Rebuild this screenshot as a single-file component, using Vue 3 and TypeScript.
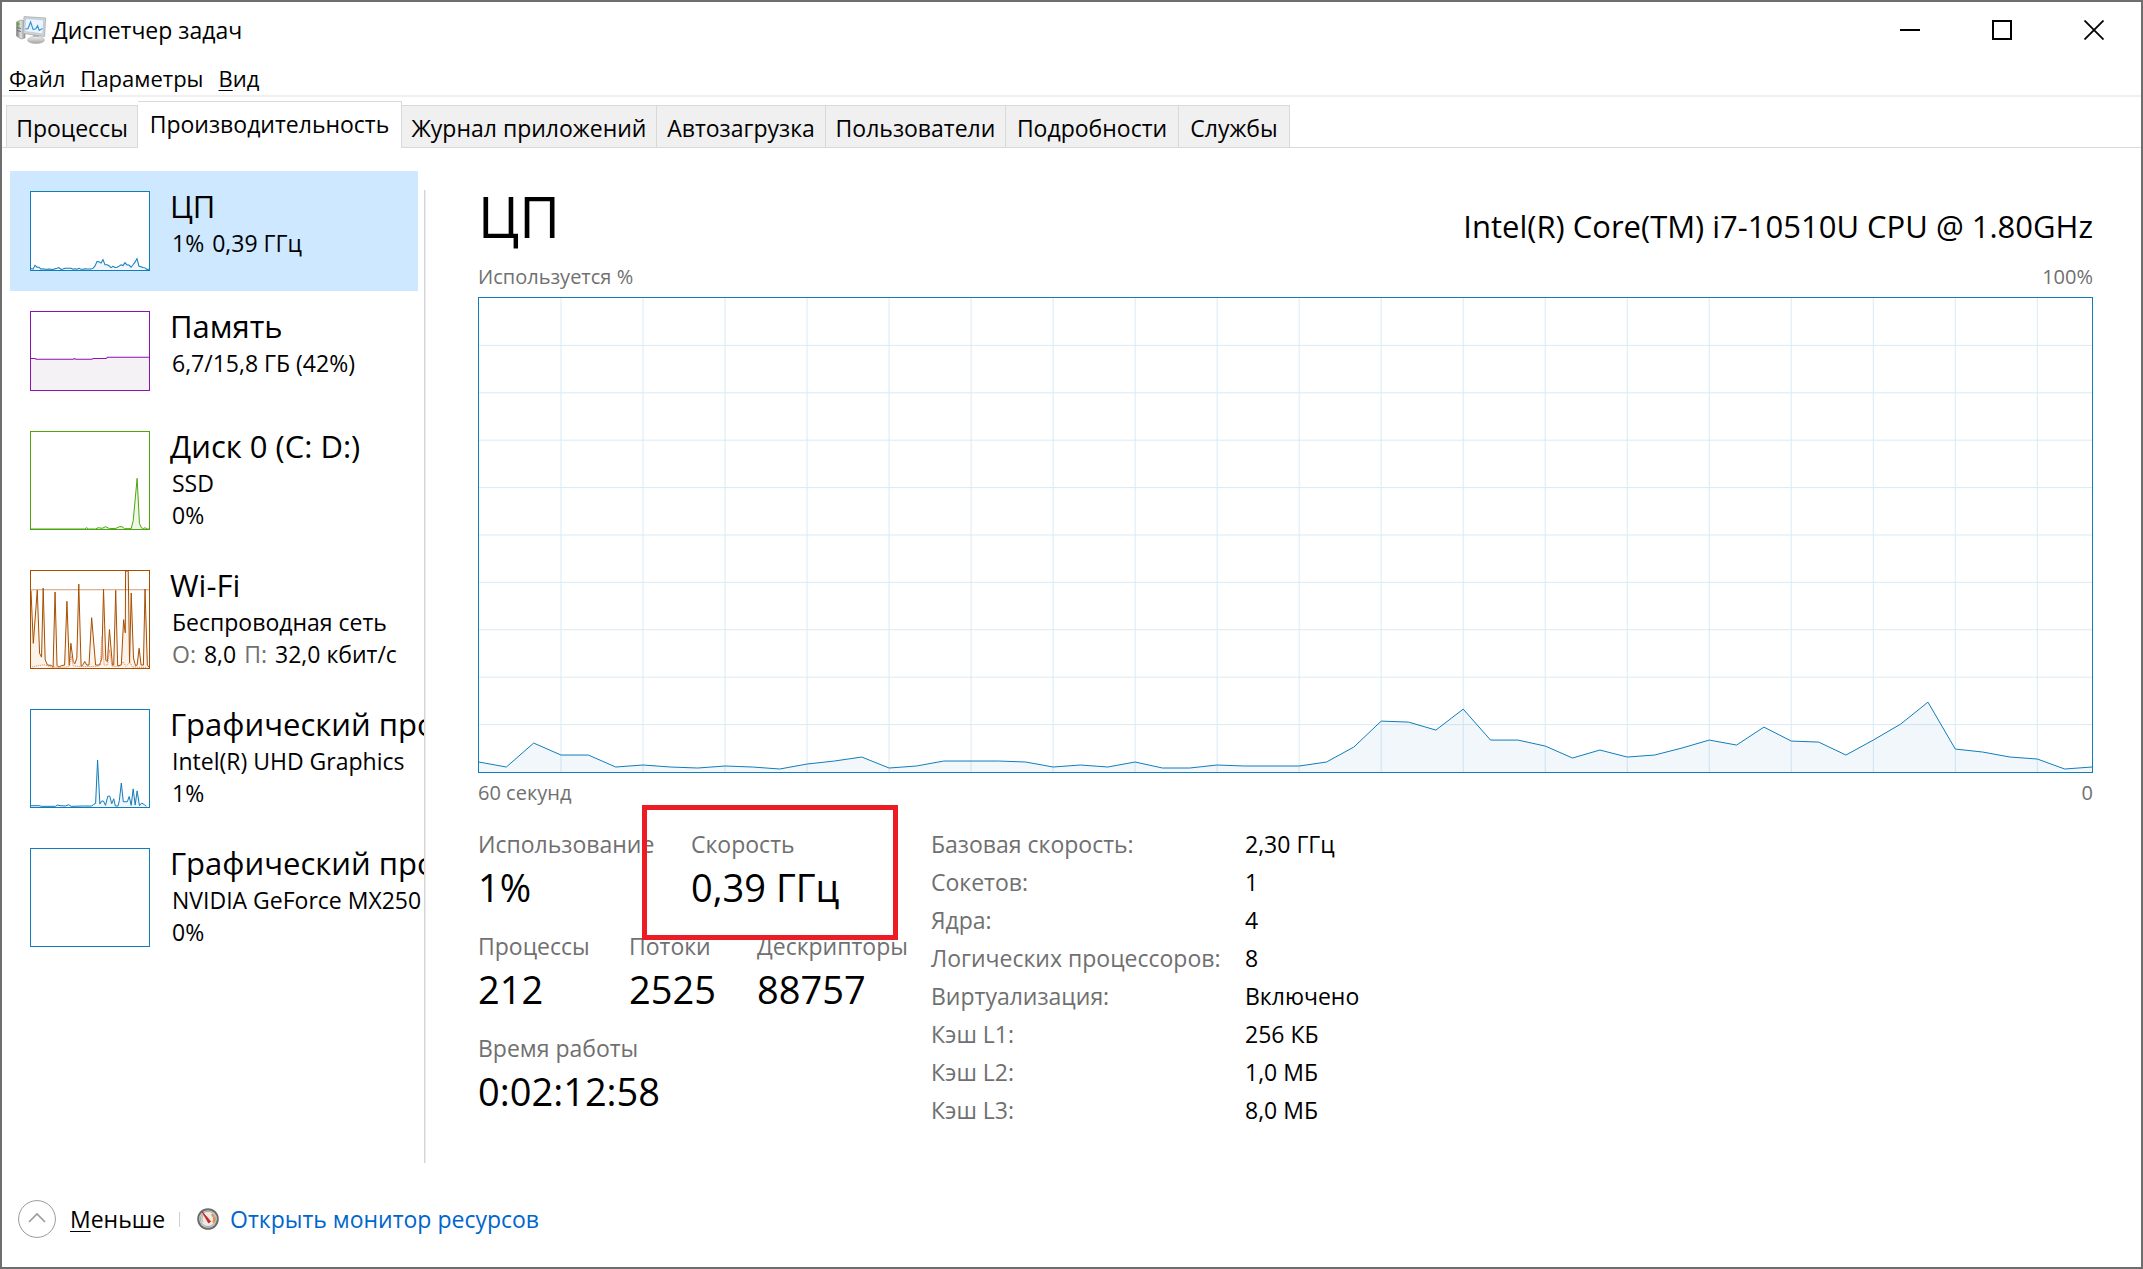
<script setup lang="ts">
import { ref } from 'vue'

interface Tab {
  label: string
  width: number
}

interface Part {
  text: string
  muted?: boolean
}

interface Resource {
  title: string
  lines: Part[][]
  kind: 'cpu' | 'memory' | 'disk' | 'wifi' | 'gpu'
  tall: boolean
  line: string
}

const tabs: Tab[] = [
  { label: 'Процессы', width: 132 },
  { label: 'Производительность', width: 264 },
  { label: 'Журнал приложений', width: 255 },
  { label: 'Автозагрузка', width: 169 },
  { label: 'Пользователи', width: 180 },
  { label: 'Подробности', width: 173 },
  { label: 'Службы', width: 111 },
]
const activeTab = ref(1)
const activeResource = ref(0)

// CPU load over the last minute, one sample per second, on a scale of 0 to 475
const load: number[] = [
  10, 5, 29, 17, 17, 5, 7, 5, 4, 6, 5, 3, 8, 11, 15, 4, 6, 11, 11, 11,
  10, 5, 7, 5, 10, 4, 4, 7, 6, 6, 6, 10, 25, 51, 50, 42, 63, 32, 32, 26,
  14, 22, 15, 17, 24, 32, 27, 45, 31, 30, 17, 32, 48, 70, 23, 20, 15, 13, 3, 5,
]
const FULL = 475
const lastIndex = load.length - 1

const loadLine = load.map((v, i) => `${i},${FULL - v}`).join(' ')
const loadArea = `0,${FULL} ${loadLine} ${lastIndex},${FULL}`

const cpuThumb = load.map((v, i) => `${(i * 358) / lastIndex},${238 - (v * 238) / FULL}`).join(' ')

const columns = Array.from({ length: 19 }, (_, i) => (i + 1) * 3)
const rows = Array.from({ length: 9 }, (_, i) => ((i + 1) * FULL) / 10)

const resources: Resource[] = [
  {
    title: 'ЦП',
    lines: [[{ text: '1%' }, { text: '0,39 ГГц' }]],
    kind: 'cpu',
    tall: false,
    line: cpuThumb,
  },
  {
    title: 'Память',
    lines: [[{ text: '6,7/15,8 ГБ (42%)' }]],
    kind: 'memory',
    tall: false,
    line: '0,142 12,142 16,144 128,144 132,142 136,144 184,144 190,142 228,142 232,138 358,138',
  },
  {
    title: 'Диск 0 (C: D:)',
    lines: [[{ text: 'SSD' }], [{ text: '0%' }]],
    kind: 'disk',
    tall: true,
    line:
      '0,295 162,295 169,291 174,295 196,295 204,291 210,292 216,293 226,288 238,294 258,293 268,288 276,288 284,294 304,294 310,270 322,141 329,278 335,291 341,294 346,291 352,295 358,295',
  },
  {
    title: 'Wi-Fi',
    lines: [
      [{ text: 'Беспроводная сеть' }],
      [{ text: 'О:', muted: true }, { text: '8,0' }, { text: 'П:', muted: true }, { text: '32,0 кбит/с' }],
    ],
    kind: 'wifi',
    tall: true,
    line:
      '0,60 7,220 19,58 26,250 32,262 37,52 43,270 50,286 62,287 67,293 73,64 79,288 85,292 92,288 102,286 109,92 116,286 121,220 128,275 133,282 139,265 145,40 152,290 158,285 163,275 169,286 176,286 184,142 196,286 208,286 215,265 220,55 227,272 232,275 238,178 247,286 251,286 257,59 263,288 274,286 281,148 286,188 287,0 295,0 299,280 304,67 311,265 317,288 322,286 328,235 334,286 341,286 346,55 353,286 358,293',
  },
  {
    title: 'Графический процессор 0',
    lines: [[{ text: 'Intel(R) UHD Graphics' }], [{ text: '1%' }]],
    kind: 'gpu',
    tall: true,
    line:
      '0,291 24,291 32,293 74,293 80,289 88,291 104,292 114,288 122,293 160,292 184,292 190,287 196,284 202,152 209,286 214,277 220,277 226,290 233,262 239,262 245,285 251,270 256,292 264,292 268,276 274,222 280,279 292,279 298,263 304,290 310,240 316,289 322,246 329,291 336,283 344,288 350,293',
  },
  {
    title: 'Графический процессор 1',
    lines: [[{ text: 'NVIDIA GeForce MX250' }], [{ text: '0%' }]],
    kind: 'gpu',
    tall: true,
    line: '',
  },
]

const thumbHeight = (r: Resource): number => (r.tall ? 297 : 240)
const thumbArea = (r: Resource): string => `0,${thumbHeight(r)} ${r.line} 358,${thumbHeight(r)}`

const counts = [
  { label: 'Процессы', value: '212', size: 'narrow' },
  { label: 'Потоки', value: '2525', size: 'small' },
  { label: 'Дескрипторы', value: '88757', size: 'small' },
]

const details = [
  { label: 'Базовая скорость:', value: '2,30 ГГц' },
  { label: 'Сокетов:', value: '1' },
  { label: 'Ядра:', value: '4' },
  { label: 'Логических процессоров:', value: '8' },
  { label: 'Виртуализация:', value: 'Включено' },
  { label: 'Кэш L1:', value: '256 КБ' },
  { label: 'Кэш L2:', value: '1,0 МБ' },
  { label: 'Кэш L3:', value: '8,0 МБ' },
]
</script>

<template>
  <div class="window">
    <header class="titlebar">
      <svg class="app-icon" viewBox="0 0 30 28" aria-hidden="true">
        <defs>
          <linearGradient id="tower" x1="0" x2="1">
            <stop offset="0" stop-color="#777" />
            <stop offset="0.5" stop-color="#e2e2e2" />
            <stop offset="1" stop-color="#8e8e8e" />
          </linearGradient>
          <linearGradient id="stand" x1="0" y1="0" x2="0" y2="1">
            <stop offset="0" stop-color="#f2f2f2" />
            <stop offset="1" stop-color="#a2a2a2" />
          </linearGradient>
        </defs>
        <path d="M0.5 6 L5 4 L9 5 V22 L5 23 L0.5 20 Z" fill="url(#tower)" stroke="#8c8c8c" stroke-width="0.6" />
        <rect x="1" y="7" width="2.4" height="2.4" fill="#44c020" />
        <path d="M1 11.5 L5 12.5 M1 14.5 L5 15.5" stroke="#666" stroke-width="0.9" />
        <path d="M17 18 L23 19 V23 H17 Z" fill="#bcbcbc" />
        <ellipse cx="20" cy="24" rx="8.5" ry="3.6" fill="url(#stand)" stroke="#b0b0b0" stroke-width="0.6" />
        <path d="M8 0.6 L29.6 2 L28.6 20.5 L7 17.4 Z" fill="#d4d4d2" stroke="#a0a0a0" stroke-width="0.7" />
        <path d="M9.6 2.6 L27.6 3.8 L26.8 18 L8.8 15.4 Z" fill="#eaf5ff" stroke="#9cc3e0" stroke-width="0.6" />
        <path d="M9.4 13 L12 12.6 L14.6 6 L17.2 13.6 L19.8 12.8 L21.6 9.6 L23.2 14.4 L26.4 12.6" fill="none" stroke="#3b93cf" stroke-width="1.2" />
      </svg>
      <h1 class="title">Диспетчер задач</h1>
      <div class="controls">
        <button type="button" aria-label="Свернуть">
          <svg viewBox="0 0 20 20"><path d="M0 10 H20" stroke-width="2" /></svg>
        </button>
        <button type="button" aria-label="Развернуть">
          <svg viewBox="0 0 20 20"><rect x="1" y="1" width="18" height="18" stroke-width="2" /></svg>
        </button>
        <button type="button" aria-label="Закрыть">
          <svg viewBox="0 0 20 20"><path d="M0.5 0.5 L19.5 19.5 M19.5 0.5 L0.5 19.5" stroke-width="1.8" /></svg>
        </button>
      </div>
    </header>

    <nav class="menubar">
      <button type="button"><u>Ф</u>айл</button>
      <button type="button"><u>П</u>араметры</button>
      <button type="button"><u>В</u>ид</button>
    </nav>

    <div class="tabs" role="tablist">
      <button
        v-for="(tab, i) in tabs"
        :key="tab.label"
        type="button"
        role="tab"
        class="tab"
        :class="{ active: i === activeTab }"
        :aria-selected="i === activeTab"
        :style="{ width: tab.width + 'px' }"
        @click="activeTab = i"
      >
        {{ tab.label }}
      </button>
    </div>

    <div class="content">
      <aside class="sidebar">
        <button
          v-for="(r, i) in resources"
          :key="r.title"
          type="button"
          class="resource"
          :class="{ selected: i === activeResource }"
          @click="activeResource = i"
        >
          <span class="thumb" :class="[r.kind, { tall: r.tall }]">
            <svg :viewBox="`0 0 358 ${thumbHeight(r) - 2}`" preserveAspectRatio="none" aria-hidden="true">
              <template v-if="r.line">
                <polygon class="area" :points="thumbArea(r)" />
                <line v-if="r.kind === 'wifi'" class="limit" x1="0" y1="57" x2="358" y2="57" />
                <polyline class="line" :points="r.line" />
                <polyline
                  v-if="r.kind === 'wifi'"
                  class="dots"
                  points="4,292 20,288 40,285 60,292 100,293 116,290 122,258 128,288 150,291 200,290 210,286 215,200 222,286 232,286 238,240 246,290 270,290 280,276 288,290 300,278 308,292 350,293"
                />
              </template>
            </svg>
          </span>
          <span class="resource-text">
            <span class="resource-title">{{ r.title }}</span>
            <span v-for="(parts, n) in r.lines" :key="n" class="resource-line">
              <span v-for="part in parts" :key="part.text" :class="{ muted: part.muted }">{{ part.text }}</span>
            </span>
          </span>
        </button>
      </aside>

      <div class="divider"></div>

      <main class="main">
        <div class="heading">
          <h2>ЦП</h2>
          <p>Intel(R) Core(TM) i7-10510U CPU @ 1.80GHz</p>
        </div>
        <div class="axis top">
          <span>Используется %</span>
          <span>100%</span>
        </div>
        <div class="chart">
          <svg :viewBox="`0 0 ${lastIndex} ${FULL}`" preserveAspectRatio="none" role="img" aria-label="Загрузка ЦП">
            <line v-for="x in columns" :key="'c' + x" class="grid" :x1="x" y1="0" :x2="x" :y2="FULL" />
            <line v-for="y in rows" :key="'r' + y" class="grid" x1="0" :y1="y" :x2="lastIndex" :y2="y" />
            <polygon class="chart-area" :points="loadArea" />
            <polyline class="chart-line" :points="loadLine" />
          </svg>
        </div>
        <div class="axis bottom">
          <span>60 секунд</span>
          <span>0</span>
        </div>

        <div class="figures">
          <div class="stats">
            <dl class="stat-row">
              <div class="stat wide">
                <dt>Использование</dt>
                <dd>1%</dd>
              </div>
              <div class="stat marked">
                <dt>Скорость</dt>
                <dd>0,39 ГГц</dd>
              </div>
            </dl>
            <dl class="stat-row">
              <div v-for="c in counts" :key="c.label" class="stat" :class="c.size">
                <dt>{{ c.label }}</dt>
                <dd>{{ c.value }}</dd>
              </div>
            </dl>
            <dl class="stat-row">
              <div class="stat">
                <dt>Время работы</dt>
                <dd>0:02:12:58</dd>
              </div>
            </dl>
          </div>
          <table class="details">
            <tbody>
              <tr v-for="d in details" :key="d.label">
                <th scope="row">{{ d.label }}</th>
                <td>{{ d.value }}</td>
              </tr>
            </tbody>
          </table>
        </div>
      </main>
    </div>

    <footer class="footer">
      <button type="button" class="less">
        <svg class="circle" viewBox="0 0 38 38" aria-hidden="true">
          <circle cx="19" cy="19" r="18.4" />
          <path d="M11 22 L19 14 L27 22" stroke-width="1.6" />
        </svg>
        <span><u>М</u>еньше</span>
      </button>
      <span class="bar"></span>
      <svg class="gauge" viewBox="0 0 22 22" aria-hidden="true">
        <circle cx="11" cy="11" r="9.8" fill="#dedcd6" stroke="#6b6e6c" stroke-width="2" />
        <circle cx="11" cy="11" r="7.6" fill="#eceae6" stroke="#a8a8a4" stroke-width="1" />
        <path d="M14.6 6.2 A6 6 0 0 1 16 14.6" fill="none" stroke="#f08a3c" stroke-width="2" />
        <path d="M6 14 A6 6 0 0 1 6.4 7" fill="none" stroke="#b9b9b5" stroke-width="1.2" />
        <path d="M5 3.6 L13.6 13.4 L11.6 15 Z" fill="#d92020" stroke="#c01818" stroke-width="0.8" />
      </svg>
      <a href="#">Открыть монитор ресурсов</a>
    </footer>
  </div>
</template>

<style>
body {
  margin: 0;
}
</style>

<style scoped>
.window {
  box-sizing: border-box;
  min-height: 100vh;
  display: flex;
  flex-direction: column;
  border: 2px solid #6e6e6e;
  background: #fff;
  color: #000;
  font-family: 'Open Sans', 'Noto Sans', sans-serif;
  font-size: 23px;
  line-height: 32px;
}

button {
  margin: 0;
  padding: 0;
  border: 0;
  background: none;
  color: inherit;
  font: inherit;
  text-align: left;
  white-space: nowrap;
}

u {
  text-decoration-thickness: 1px;
  text-underline-offset: 3px;
}

h1,
h2,
p,
dl,
dd {
  margin: 0;
  font-weight: 400;
}

.titlebar {
  display: flex;
  align-items: center;
  height: 56px;
  padding: 0 1px 0 14px;
}

.app-icon {
  width: 30px;
  height: 28px;
}

.title {
  margin-left: 6px;
  font-size: 23px;
  flex: 1;
}

.controls {
  display: flex;
}

.controls button {
  width: 92px;
  height: 54px;
  display: flex;
  align-items: center;
  justify-content: center;
}

.controls svg {
  width: 20px;
  height: 20px;
  fill: none;
  stroke: #000;
}

.menubar {
  display: flex;
  gap: 15px;
  padding: 4px 7px 1px;
  border-bottom: 2px solid #f0f0f0;
  font-size: 22px;
}

.tabs {
  display: flex;
  align-items: flex-end;
  padding: 4px 4px 0;
  border-bottom: 1px solid #d9d9d9;
}

.tab {
  box-sizing: border-box;
  height: 42px;
  padding-top: 3px;
  border: solid #d9d9d9;
  border-width: 1px 1px 0 0;
  background: #f0f0f0;
  text-align: center;
}

.tab:first-child {
  border-left-width: 1px;
}

.tab.active {
  height: 47px;
  margin-bottom: -1px;
  padding: 0 0 2px;
  background: #fff;
}

.content {
  flex: 1;
  display: flex;
  padding-top: 23px;
}

.sidebar {
  width: 414px;
  margin-left: 8px;
  overflow: hidden;
  flex: none;
}

.resource {
  box-sizing: border-box;
  display: flex;
  width: 408px;
  padding: 20px 0 20px 20px;
}

.resource.selected {
  background: #cde8ff;
}

.thumb {
  box-sizing: border-box;
  flex: none;
  width: 120px;
  height: 80px;
  border: 1px solid var(--edge);
  background: #fff;
}

.thumb.tall {
  height: 99px;
}

.thumb svg {
  display: block;
  width: 100%;
  height: 100%;
}

.thumb.cpu,
.thumb.gpu {
  --edge: #117dbb;
  --fill: #f1f6fa;
}

.thumb.memory {
  --edge: #8b12ae;
  --fill: #f4f2f4;
}

.thumb.disk {
  --edge: #4da60c;
  --fill: #eff7e9;
}

.thumb.wifi {
  --edge: #a74f01;
  --fill: #fcf3eb;
}

.area {
  fill: var(--fill);
}

.line,
.dots,
.limit {
  fill: none;
  stroke: var(--edge);
  stroke-width: 1px;
  vector-effect: non-scaling-stroke;
}

.limit {
  stroke: #cf9d72;
}

.dots {
  stroke: #e8834a;
  stroke-dasharray: 1 1;
}

.resource-text {
  display: flex;
  flex-direction: column;
  margin: -6px 0 -20px 20px;
}

.resource-title {
  font-size: 31px;
  line-height: 42px;
}

.resource-line {
  display: flex;
  gap: 8px;
  padding-left: 2px;
}

.muted {
  color: #707070;
}

.divider {
  width: 1px;
  margin-top: 19px;
  border-right: 1px solid #ececec;
  background: #d5d5d5;
}

.main {
  flex: 1;
  display: flex;
  flex-direction: column;
  padding: 15px 48px 34px 52px;
}

.heading {
  display: flex;
  justify-content: space-between;
  align-items: baseline;
  height: 60px;
  line-height: 60px;
}

.heading h2 {
  font-size: 56px;
}

.heading p {
  font-size: 31px;
}

.axis {
  display: flex;
  justify-content: space-between;
  color: #707070;
  font-size: 20px;
  line-height: 28px;
}

.axis.top {
  margin: 17px 0 6px;
}

.axis.bottom {
  margin: 6px 0 18px;
}

.chart {
  flex: 1 0 300px;
  display: flex;
  border: 1px solid #117dbb;
  position: relative;
}

.chart svg {
  position: absolute;
  inset: 0;
  width: 100%;
  height: 100%;
}

.grid {
  stroke: #d9eaf4;
  stroke-width: 1px;
  vector-effect: non-scaling-stroke;
  shape-rendering: crispEdges;
}

.chart-area {
  fill: rgba(17, 125, 187, 0.06);
}

.chart-line {
  fill: none;
  stroke: #117dbb;
  stroke-width: 1px;
  vector-effect: non-scaling-stroke;
}

.figures {
  display: flex;
}

.stats {
  display: flex;
  flex-direction: column;
  gap: 19px;
  width: 453px;
  padding-top: 3px;
}

.stat-row {
  display: flex;
}

.stat {
  position: relative;
  white-space: nowrap;
}

.stat.wide {
  width: 213px;
}

.stat.narrow {
  width: 151px;
}

.stat.small {
  width: 128px;
}

.stat dt {
  color: #707070;
}

.stat dd {
  margin-top: 3px;
  font-size: 38px;
  line-height: 48px;
}

.stat.marked::after {
  content: '';
  position: absolute;
  z-index: 1;
  box-sizing: border-box;
  left: -49px;
  top: -23px;
  width: 256px;
  height: 135px;
  border: 5px solid #ed1c24;
}

.details {
  border-collapse: collapse;
  line-height: 38px;
}

.details th {
  min-width: 314px;
  padding: 0;
  color: #707070;
  font-weight: 400;
  text-align: left;
}

.details td {
  padding: 0;
}

.footer {
  display: flex;
  align-items: center;
  height: 96px;
  padding: 8px 16px 0;
}

.less {
  display: flex;
  align-items: center;
  gap: 14px;
}

.circle {
  width: 38px;
  height: 38px;
  fill: none;
  stroke: #9a9a9a;
}

.bar {
  width: 1px;
  height: 15px;
  margin: 0 17px 0 14px;
  background: #d0d0d0;
}

.gauge {
  width: 22px;
  height: 22px;
  margin-right: 11px;
}

.footer a {
  color: #0066cc;
  text-decoration: none;
}
</style>
